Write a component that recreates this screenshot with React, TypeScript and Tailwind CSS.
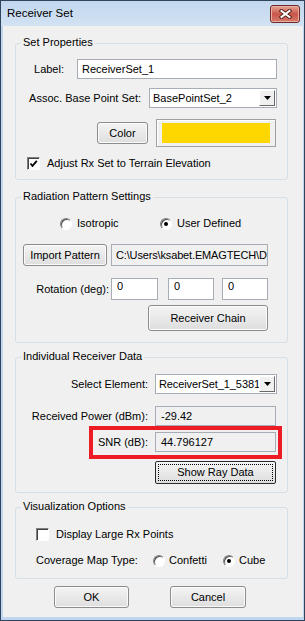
import React from "react";

const ui = "font-['Liberation_Sans',Arial,sans-serif] text-[11px] leading-[13px] text-black";

function Group({ title, className = "", children }: { title: string; className?: string; children: React.ReactNode }) {
  return (
    <div className={`relative ml-[12px] w-[273px] rounded-[3px] border border-[#d5dfe5] ${className}`}>
      <span className="absolute left-[5px] top-[-8px] bg-[#f0f0f0] px-[2px]">{title}</span>
      {children}
    </div>
  );
}

function Button({ children, className = "" }: { children: React.ReactNode; className?: string }) {
  return (
    <div className={`flex items-center justify-center rounded-[3px] border border-[#8c8c8c] bg-linear-to-b from-[#f4f4f4] to-[#dedede] shadow-[inset_0_0_0_1px_#fbfbfb] ${className}`}>
      {children}
    </div>
  );
}

function TextBox({ value, className = "", readOnly = false }: { value: string; className?: string; readOnly?: boolean }) {
  return (
    <div className={`flex items-center overflow-hidden whitespace-nowrap border border-[#a7adb5] pl-[4px] ${readOnly ? "bg-[#f0f0f0]" : "bg-white"} ${className}`}>
      {value}
    </div>
  );
}

function Combo({ value, className = "" }: { value: string; className?: string }) {
  return (
    <div className={`flex items-stretch border border-[#a7adb5] bg-white p-px ${className}`}>
      <div className="flex flex-1 items-center overflow-hidden whitespace-nowrap pl-[2px]">{value}</div>
      <div className="flex w-[16px] shrink-0 items-center justify-center border border-t-white border-l-white border-r-[#696969] border-b-[#696969] bg-[#f0f0f0]">
        <svg width="7" height="4" viewBox="0 0 7 4">
          <path d="M0 0h7L3.5 4z" fill="#000" />
        </svg>
      </div>
    </div>
  );
}

function Check({ checked = false }: { checked?: boolean }) {
  return (
    <div className="flex h-[13px] w-[13px] items-center justify-center border border-t-[#808080] border-l-[#808080] border-r-white border-b-white bg-white shadow-[inset_1px_1px_0_#404040]">
      {checked && (
        <svg width="9" height="9" viewBox="0 0 9 9">
          <path d="M1.5 4.5 L3.5 6.8 L7.8 1.8" stroke="#000" strokeWidth="1.8" fill="none" />
        </svg>
      )}
    </div>
  );
}

function Radio({ checked = false }: { checked?: boolean }) {
  return (
    <div className="flex h-[12px] w-[12px] items-center justify-center rounded-full border border-t-[#808080] border-l-[#808080] border-r-white border-b-white bg-white shadow-[inset_1px_1px_0_#505050]">
      {checked && <div className="h-[4px] w-[4px] rounded-full bg-black" />}
    </div>
  );
}

export default function App() {
  return (
    <div className={`${ui} flex h-[621px] w-[305px] flex-col border border-[#30445c] bg-[#bfd6ee]`}>
      {/* title bar */}
      <div className="flex h-[25px] shrink-0 items-center justify-between bg-linear-to-b from-[#c2d7ee] to-[#d2e2f3] pl-[6px]">
        <span className="text-[11.5px]">Receiver Set</span>
        <div className="mr-[4px] flex h-[18px] w-[30px] items-center justify-center rounded-[3px] border border-[#6e2a22] bg-linear-to-b from-[#e8a597] via-[#c75649] to-[#d77a6c] shadow-[inset_0_0_0_1px_#eab0a6]">
          <svg width="13" height="10" viewBox="0 0 13 10">
            <path d="M2.5 2 L10.5 8 M10.5 2 L2.5 8" stroke="#5a1f18" strokeWidth="4" strokeLinecap="square" />
            <path d="M2.5 2 L10.5 8 M10.5 2 L2.5 8" stroke="#ffffff" strokeWidth="2" strokeLinecap="square" />
          </svg>
        </div>
      </div>

      {/* dialog body */}
      <div className="mb-[3px] ml-[2px] mr-[1px] flex flex-1 flex-col bg-[#f0f0f0]">
        <Group title="Set Properties" className="mt-[17px]">
          <div className="mt-[15px] flex h-[20px] items-center">
            <span className="w-[48px] text-right">Label:</span>
            <TextBox value="ReceiverSet_1" className="ml-[13px] h-[20px] w-[200px]" />
          </div>
          <div className="mt-[9px] flex h-[20px] items-center">
            <span className="w-[125px] text-right">Assoc. Base Point Set:</span>
            <Combo value="BasePointSet_2" className="ml-[8px] h-[20px] w-[128px]" />
          </div>
          <div className="mt-[11px] flex h-[28px] items-center pl-[81px]">
            <Button className="h-[22px] w-[51px]">Color</Button>
            <div className="ml-[8px] flex h-[28px] w-[120px] items-center justify-center border border-[#a0a0a0] shadow-[inset_1px_1px_0_#ffffff]">
              <div className="h-[20px] w-[108px] bg-[#ffd700]" />
            </div>
          </div>
          <div className="mb-[9px] mt-[10px] flex h-[13px] items-center pl-[11px]">
            <Check checked />
            <span className="ml-[7px]">Adjust Rx Set to Terrain Elevation</span>
          </div>
        </Group>

        <Group title="Radiation Pattern Settings" className="mt-[17px]">
          <div className="mt-[19px] flex h-[13px] items-center pl-[44px]">
            <div className="flex w-[100px] items-center">
              <Radio />
              <span className="ml-[5px]">Isotropic</span>
            </div>
            <div className="flex items-center">
              <Radio checked />
              <span className="ml-[5px]">User Defined</span>
            </div>
          </div>
          <div className="mt-[14px] flex h-[22px] items-center pl-[7px]">
            <Button className="h-[22px] w-[84px]">Import Pattern</Button>
            <TextBox value="C:\Users\ksabet.EMAGTECH\D" readOnly className="ml-[4px] h-[22px] w-[157px] tracking-[-0.15px]" />
          </div>
          <div className="mt-[12px] flex h-[22px] items-center">
            <span className="w-[95px] pr-[2px] text-right">Rotation (deg):</span>
            <div className="h-[22px] w-[47px] border border-[#a7adb5] bg-white pl-[5px] pt-[1px]">0</div>
            <div className="ml-[10px] h-[22px] w-[46px] border border-[#a7adb5] bg-white pl-[5px] pt-[1px]">0</div>
            <div className="ml-[8px] h-[22px] w-[46px] border border-[#a7adb5] bg-white pl-[5px] pt-[1px]">0</div>
          </div>
          <div className="mb-[11px] mt-[5px] flex pl-[132px]">
            <Button className="h-[26px] w-[120px]">Receiver Chain</Button>
          </div>
        </Group>

        <Group title="Individual Receiver Data" className="mt-[14px]">
          <div className="mt-[16px] flex h-[20px] items-center">
            <span className="w-[139px] pr-[7px] text-right">Select Element:</span>
            <Combo value="ReceiverSet_1_5381" className="h-[20px] w-[122px] tracking-[-0.1px]" />
          </div>
          <div className="mt-[12px] flex h-[20px] items-center">
            <span className="w-[139px] pr-[7px] text-right">Received Power (dBm):</span>
            <TextBox value="-29.42" readOnly className="h-[20px] w-[121px] pl-[5px]" />
          </div>
          <div className="mt-[6px] flex h-[20px] items-center">
            <span className="w-[139px] pr-[7px] text-right">SNR (dB):</span>
            <TextBox value="44.796127" readOnly className="h-[20px] w-[121px] pl-[5px]" />
          </div>
          <div className="mb-[8px] mt-[9px] flex pl-[139px]">
            <div className="relative flex h-[23px] w-[121px] items-center justify-center rounded-[2px] border border-[#2b2b2b] bg-linear-to-b from-[#f4f4f4] to-[#dedede]">
              <span className="absolute inset-[2px] border border-dotted border-black" />
              Show Ray Data
            </div>
          </div>
          {/* red highlight drawn over the SNR row */}
          <div className="absolute left-[73px] top-[68px] h-[33px] w-[193px] border-[4px] border-[#ed1c24]" />
        </Group>

        <Group title="Visualization Options" className="mt-[14px]">
          <div className="mt-[20px] flex h-[13px] items-center pl-[20px]">
            <Check />
            <span className="ml-[7px]">Display Large Rx Points</span>
          </div>
          <div className="mb-[11px] mt-[13px] flex h-[13px] items-center pl-[20px]">
            <span className="w-[117px]">Coverage Map Type:</span>
            <div className="flex w-[70px] items-center">
              <Radio />
              <span className="ml-[4px]">Confetti</span>
            </div>
            <div className="flex items-center">
              <Radio checked />
              <span className="ml-[4px]">Cube</span>
            </div>
          </div>
        </Group>

        <div className="mt-[7px] flex pl-[51px]">
          <Button className="h-[22px] w-[75px]">OK</Button>
          <Button className="ml-[41px] h-[22px] w-[76px]">Cancel</Button>
        </div>
      </div>
    </div>
  );
}
